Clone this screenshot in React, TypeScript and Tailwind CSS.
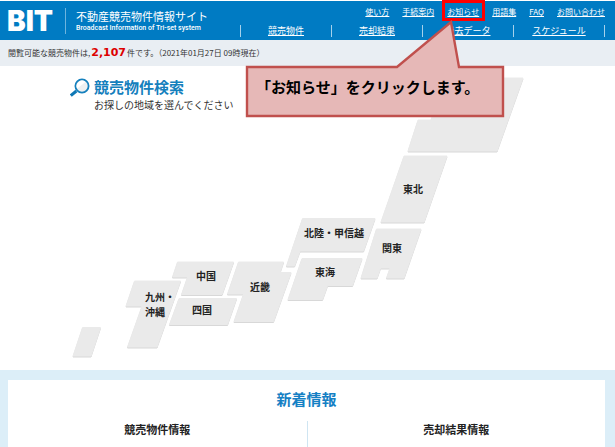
import React from "react";

const subLinks = ["使い方", "手続案内", "お知らせ", "用語集", "FAQ", "お問い合わせ"];
const mainLinks = ["競売物件", "売却結果", "過去データ", "スケジュール"];

const regions = [
  { name: "北海道", points: "418,120 431,120 446,78 523,78 497,151 408,151", labels: [] },
  { name: "東北", points: "404,156 447,156 424,222 381,222", labels: [{ x: 403, y: 193, text: "東北" }] },
  { name: "関東", points: "376.5,229 421,229 404,278 386.5,278 390,268 380.5,268 377,278 361,278", labels: [{ x: 382, y: 252, text: "関東" }] },
  { name: "北陸・甲信越", points: "302.5,218.5 375,218.5 363.5,251 300,251 294.5,266 286.5,266", labels: [{ x: 304, y: 237, text: "北陸・甲信越" }] },
  { name: "東海", points: "302,258.5 362,258.5 352.5,285.5 327.5,285.5 322.5,299.5 288,299.5", labels: [{ x: 315, y: 276, text: "東海" }] },
  { name: "近畿", points: "238.5,262 283.5,262 280,272.5 291,272.5 273.5,321.5 234,321.5 243.5,294 227.5,294", labels: [{ x: 250, y: 291, text: "近畿" }] },
  { name: "中国", points: "177.5,262 233.5,262 222,294.5 181.5,294.5 187.5,277 172.5,277", labels: [{ x: 196, y: 280, text: "中国" }] },
  { name: "四国", points: "179,298.5 236.5,298.5 227.5,324.5 169.5,324.5", labels: [{ x: 192, y: 314, text: "四国" }] },
  {
    name: "九州・沖縄",
    points: "134.5,281 180.5,281 157,347 127.5,347 142,306 126,306",
    labels: [{ x: 145, y: 301, text: "九州・" }, { x: 145, y: 316, text: "沖縄" }],
    island: "82.5,327.5 100.5,327.5 91,356 73,356",
  },
];

function Header() {
  return (
    <header className="mt-px flex h-[39px] justify-between bg-[#007bc3] text-white">
      <div className="flex items-center pl-[7px]">
        <a href="#" className="w-[46px] font-['Inter',sans-serif] text-[28px] leading-none font-black">BIT</a>
        <div className="ml-3 border-l border-[#6db4de] py-px pl-[10px]">
          <h1 className="text-[11px] leading-[14px]">不動産競売物件情報サイト</h1>
          <p className="font-['Roboto',sans-serif] text-[7px] leading-[10px] font-medium">
            Broadcast Information of Tri-set system
          </p>
        </div>
      </div>
      <div className="flex flex-col pr-[10px]">
        <nav className="flex justify-end gap-[13px] pt-[5px] text-[8px] leading-3">
          {subLinks.map((label) => (
            <a key={label} href="#" className="relative underline">
              {label}
              {label === "お知らせ" && (
                <span className="absolute -top-[6px] -right-[6px] -left-[5px] h-[21px] border-3 border-[#ff0000]" />
              )}
            </a>
          ))}
        </nav>
        <nav className="mt-[7px] flex border-l border-[#a5d1eb] text-[9px] leading-3">
          {mainLinks.map((label) => (
            <a key={label} href="#" className="w-[91px] border-r border-[#a5d1eb] text-center underline">
              {label}
            </a>
          ))}
        </nav>
      </div>
    </header>
  );
}

function Callout() {
  return (
    <div className="absolute top-5 right-[110px] h-[98px] w-[260px]">
      <svg viewBox="0 0 260 98" className="absolute inset-0 h-full w-full">
        <path d="M2 47H152L206 2L214 47H258V96H2Z" fill="#e6b8b7" stroke="#c0504d" strokeWidth="2.4" />
      </svg>
      <p className="relative pt-[56px] pl-[11px] text-[15px] leading-[22px] font-bold whitespace-nowrap text-black">
        「お知らせ」をクリックします。
      </p>
    </div>
  );
}

function JapanMap() {
  return (
    <svg viewBox="0 66 615 304" className="h-auto w-full [grid-area:1/1]">
      {regions.map((region) => (
        <a key={region.name} href="#" aria-label={region.name}>
          <g fill="#eaeaea" stroke="#eaeaea" strokeLinejoin="round" className="drop-shadow-[0_1px_0_#d8d8d8]">
            <polygon points={region.points} />
            {region.island && <polygon points={region.island} />}
          </g>
          {region.labels.map((label) => (
            <text key={label.text} x={label.x} y={label.y} fill="#222" className="text-[10px] font-bold">
              {label.text}
            </text>
          ))}
        </a>
      ))}
    </svg>
  );
}

function SearchIcon() {
  return (
    <svg viewBox="0 0 20 20" className="h-5 w-5" fill="none">
      <path d="M0.8 17.6L6.4 13" stroke="#0e78b5" strokeWidth="3" />
      <circle cx="12" cy="8" r="6.6" fill="#eef0f1" stroke="#1580bd" strokeWidth="1.8" />
      <path d="M7.2 10.5A5.4 5.4 0 0 1 15.5 4Z" fill="#fff" />
    </svg>
  );
}

export default function App() {
  return (
    <div className="relative flex min-h-screen flex-col bg-white font-['Noto_Sans_CJK_JP',sans-serif] text-[#333]">
      <Header />
      <div className="flex h-[26px] items-center bg-[#e9eef3] pl-2 text-[8px] whitespace-pre">
        <span>閲覧可能な競売物件は,</span>
        <strong className="px-px font-['DejaVu_Sans',sans-serif] text-[11px] text-[#dd0000]">2,107</strong>
        <span>件です。（2021年01月27日 09時現在）</span>
      </div>

      <main className="grid">
        <JapanMap />
        <div className="flex items-start gap-1 justify-self-start pt-3 pl-[70px] [grid-area:1/1]">
          <SearchIcon />
          <div>
            <h2 className="text-[15px] leading-[18px] font-bold text-[#1580bd]">競売物件検索</h2>
            <p className="mt-px text-[10px] leading-4">お探しの地域を選んでください</p>
          </div>
        </div>
      </main>

      <section className="flex grow flex-col bg-[#dceef8] pt-[10px] pr-[10px] pl-2">
        <div className="flex grow flex-col bg-white pt-[9px]">
          <h2 className="text-center text-[15px] leading-5 font-bold text-[#1580c4]">新着情報</h2>
          <div className="mt-3 grid grow grid-cols-2 text-center text-[11px] leading-4 font-bold text-[#222]">
            <h3>競売物件情報</h3>
            <h3 className="border-l border-[#cfe5f2]">売却結果情報</h3>
          </div>
        </div>
      </section>

      <Callout />
    </div>
  );
}
